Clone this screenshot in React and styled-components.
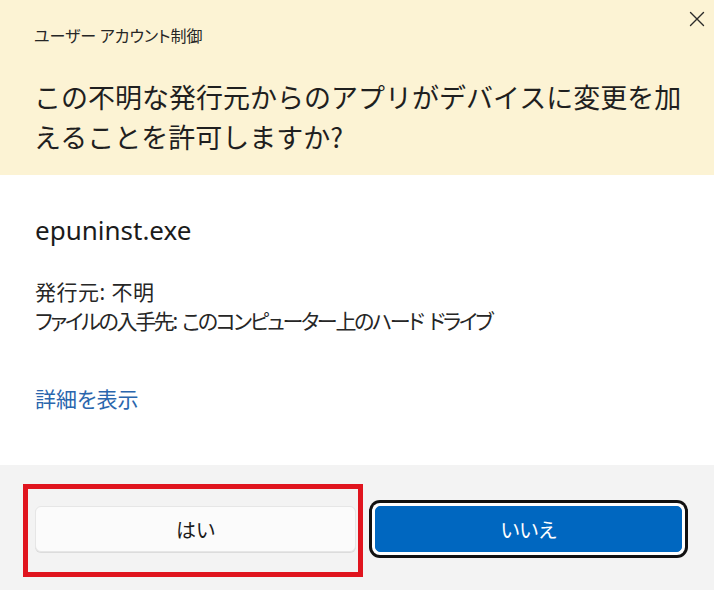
import React from "react";
import styled, { createGlobalStyle } from "styled-components";

const GlobalStyle = createGlobalStyle`
    html, body {
        margin: 0;
        padding: 0;
        background: #ffffff;
    }
    body {
        font-family: "Noto Sans", "Noto Sans CJK JP", sans-serif;
        color: #1b1b1b;
    }
`;

const App = () => {
    return (
        <Dialog>
            <GlobalStyle />
            <Header>
                <Caption>ユーザー アカウント制御</Caption>
                <Close aria-label="閉じる">
                    <svg width="16" height="16" viewBox="0 0 16 16">
                        <path d="M1.5 1.5 L14.5 14.5 M14.5 1.5 L1.5 14.5" stroke="#2b2b2b" strokeWidth="1.4" strokeLinecap="round" />
                    </svg>
                </Close>
                <Question>この不明な発行元からのアプリがデバイスに変更を加えることを許可しますか?</Question>
            </Header>
            <Body>
                <FileName>epuninst.exe</FileName>
                <Info>
                    <Line>発行元: 不明</Line>
                    <Line tight>ファイルの入手先: このコンピューター上のハード ドライブ</Line>
                </Info>
                <Details href="#">詳細を表示</Details>
            </Body>
            <Footer>
                <Marked>
                    <Button>はい</Button>
                    <Highlight />
                </Marked>
                <Button primary>いいえ</Button>
            </Footer>
        </Dialog>
    );
};

export default App;

const Dialog = styled.div`
    width: 714px;
    height: 590px;
    display: flex;
    flex-direction: column;
    background: #ffffff;
    overflow: hidden;
`;
const Header = styled.div`
    position: relative;
    background: #fcf3d4;
    padding: 25px 20px 18px 34px;
`;
const Caption = styled.div`
    font-family: "Noto Sans CJK JP", sans-serif;
    font-feature-settings: "palt";
    font-size: 16px;
    line-height: 20px;
    color: #262626;
    margin-bottom: 32px;
`;
const Close = styled.div`
    position: absolute;
    top: 11px;
    right: 9px;
    width: 16px;
    height: 16px;
    display: flex;
    svg {
        display: block;
    }
`;
const Question = styled.h1`
    margin: 0;
    font-family: "Noto Sans CJK JP", sans-serif;
    font-weight: 400;
    font-size: 27px;
    line-height: 40px;
    color: #1f1f1f;
`;
const Body = styled.div`
    flex: 1;
    padding: 39px 35px 0;
    display: flex;
    flex-direction: column;
    align-items: flex-start;
`;
const FileName = styled.div`
    font-size: 26px;
    line-height: 32px;
    color: #1b1b1b;
    margin-bottom: 32px;
`;
const Info = styled.div`
    font-feature-settings: "palt";
    font-size: 21px;
    line-height: 29px;
    color: #262626;
    margin-bottom: 49px;
`;
const Line = styled.div`
    letter-spacing: ${({ tight }) => (tight ? "-2.3px" : "0.5px")};
    word-spacing: ${({ tight }) => (tight ? "3px" : "0")};
    white-space: nowrap;
`;
const Details = styled.a`
    font-feature-settings: "palt";
    font-size: 21px;
    line-height: 29px;
    color: #2a66ad;
    text-decoration: none;
`;
const Footer = styled.div`
    height: 125px;
    box-sizing: border-box;
    background: #f3f3f3;
    padding: 41px 32px 0 35px;
    display: grid;
    grid-template-columns: 321px 307px;
    column-gap: 19px;
    align-items: start;
`;
const Marked = styled.div`
    position: relative;
`;
const Highlight = styled.div`
    position: absolute;
    left: -12px;
    right: -7px;
    top: -22px;
    bottom: -25px;
    border: 5px solid #e0141e;
    pointer-events: none;
`;
const Button = styled.div`
    height: 46px;
    box-sizing: border-box;
    display: flex;
    align-items: center;
    justify-content: center;
    font-family: "Noto Sans CJK JP", sans-serif;
    font-feature-settings: "palt";
    font-size: 20px;
    background: ${({ primary }) => (primary ? "#0067c0" : "#fbfbfb")};
    color: ${({ primary }) => (primary ? "#ffffff" : "#1b1b1b")};
    border: 1px solid ${({ primary }) => (primary ? "#0067c0" : "#e6e6e6")};
    box-shadow: ${({ primary }) =>
        primary ? "0 0 0 3px #ffffff, 0 0 0 6px #111111" : "0 1px 0 #dcdcdc"};
    border-radius: ${({ primary }) => (primary ? "5px" : "6px")};
`;
